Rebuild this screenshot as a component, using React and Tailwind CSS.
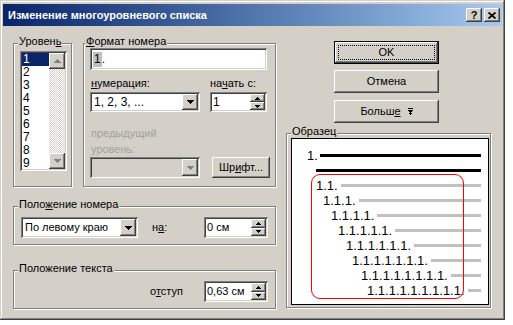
const raised =
  "bg-[#d4d0c8] shadow-[inset_-1px_-1px_0_#404040,inset_1px_1px_0_#fff,inset_-2px_-2px_0_#808080,inset_2px_2px_0_#d4d0c8]";
const sunken =
  "shadow-[inset_1px_1px_0_#808080,inset_-1px_-1px_0_#fff,inset_2px_2px_0_#404040,inset_-2px_-2px_0_#d4d0c8]";

function Down({ color = "#000" }) {
  return (
    <svg width="7" height="4" viewBox="0 0 7 4" shapeRendering="crispEdges">
      <path d="M0 0h7v1H0zM1 1h5v1H1zM2 2h3v1H2zM3 3h1v1H3z" fill={color} />
    </svg>
  );
}

function Up({ color = "#000" }) {
  return (
    <svg width="7" height="4" viewBox="0 0 7 4" shapeRendering="crispEdges">
      <path d="M3 0h1v1H3zM2 1h3v1H2zM1 2h5v1H1zM0 3h7v1H0z" fill={color} />
    </svg>
  );
}

function SmallUp() {
  return (
    <svg width="5" height="3" viewBox="0 0 5 3" shapeRendering="crispEdges">
      <path d="M2 0h1v1H2zM1 1h3v1H1zM0 2h5v1H0z" fill="#000" />
    </svg>
  );
}

function SmallDown() {
  return (
    <svg width="5" height="3" viewBox="0 0 5 3" shapeRendering="crispEdges">
      <path d="M0 0h5v1H0zM1 1h3v1H1zM2 2h1v1H2z" fill="#000" />
    </svg>
  );
}

function Group({ label, left = "left-[4px]", className = "", children }) {
  return (
    <div className={"relative border border-[#808080] shadow-[inset_1px_1px_0_#fff,1px_1px_0_#fff] " + className}>
      <span className={"absolute -top-[9px] bg-[#d4d0c8] px-[1px] leading-[13px] whitespace-nowrap " + left}>{label}</span>
      {children}
    </div>
  );
}

function Combo({ value, className = "", disabled }) {
  return (
    <div className={`${sunken} ${disabled ? "bg-[#d4d0c8]" : "bg-white"} p-[2px] flex ${className}`}>
      <div className="flex-1 flex items-center pl-[2px] whitespace-nowrap">{value}</div>
      <div className={`${raised} w-[16px] flex items-center justify-center`}>
        <Down color={disabled ? "#808080" : "#000"} />
      </div>
    </div>
  );
}

function Spin({ value, className = "" }) {
  return (
    <div className={`${sunken} bg-white p-[2px] flex ${className}`}>
      <div className="flex-1 flex items-center pl-[1px] whitespace-nowrap">{value}</div>
      <div className="w-[15px] flex flex-col">
        <div className={`${raised} flex-1 flex items-center justify-center`}>
          <SmallUp />
        </div>
        <div className={`${raised} flex-1 flex items-center justify-center`}>
          <SmallDown />
        </div>
      </div>
    </div>
  );
}

const rows = [
  { t: "1.1.", pl: "pl-[24px]" },
  { t: "1.1.1.", pl: "pl-[31px]" },
  { t: "1.1.1.1.", pl: "pl-[39px]" },
  { t: "1.1.1.1.1.", pl: "pl-[46px]" },
  { t: "1.1.1.1.1.1.", pl: "pl-[54px]" },
  { t: "1.1.1.1.1.1.1.", pl: "pl-[60px]" },
  { t: "1.1.1.1.1.1.1.1.", pl: "pl-[69px]" },
  { t: "1.1.1.1.1.1.1.1.1.", pl: "pl-[75px]" },
];

export default function App() {
  return (
    <div className="w-[513px] h-[325px] bg-white font-['Liberation_Sans',Arial,sans-serif] text-[11px] text-black">
      <div className="w-[505px] h-[320px] bg-[#d4d0c8] pt-[4px] px-[3px] shadow-[inset_-1px_-1px_0_#404040,inset_1px_1px_0_#d4d0c8,inset_-2px_-2px_0_#808080,inset_2px_2px_0_#fff]">
        {/* title bar */}
        <div className="h-[22px] flex items-center pl-[5px] pr-[2px] bg-linear-to-r from-[#0a246a] to-[#a6caf0]">
          <span className="flex-1 text-white font-bold text-[11px]">Изменение многоуровневого списка</span>
          <div className={`${raised} w-[16px] h-[14px] flex items-center justify-center font-bold text-[11px] leading-none`}>?</div>
          <div className={`${raised} w-[16px] h-[14px] ml-[2px] flex items-center justify-center`}>
            <svg width="8" height="7" viewBox="0 0 8 7">
              <path d="M0.5 0.5L7.5 6.5M7.5 0.5L0.5 6.5" stroke="#000" strokeWidth="1.7" />
            </svg>
          </div>
        </div>

        <div className="flex pl-[10px] mt-[15px]">
          {/* left column */}
          <div className="w-[263px] pt-[2px]">
            <div className="flex gap-[11px] h-[144px]">
              <Group label={<>Уровен<u>ь</u></>} left="left-[4px]" className="w-[59px] h-full pl-[6px] pt-[7px]">
                <div className={`${sunken} bg-white w-[47px] h-[120px] p-[2px] flex`}>
                  <div className="flex-1 text-[12px]">
                    {["1", "2", "3", "4", "5", "6", "7", "8", "9"].map((n, i) => (
                      <div
                        key={n}
                        className={`h-[13px] leading-[13px] pl-[1px] ${i === 0 ? "bg-[#0a246a] text-white" : ""}`}
                      >
                        {n}
                      </div>
                    ))}
                  </div>
                  <div className="w-[16px] flex flex-col bg-[repeating-conic-gradient(#d4d0c8_0_25%,#fff_0_50%)] bg-[length:2px_2px]">
                    <div className={`${raised} h-[16px] flex items-center justify-center`}>
                      <Up color="#808080" />
                    </div>
                    <div className="flex-1" />
                    <div className={`${raised} h-[16px] flex items-center justify-center`}>
                      <Down color="#808080" />
                    </div>
                  </div>
                </div>
              </Group>

              <Group label={<><u>Ф</u>ормат номера</>} left="left-[1px]" className="w-[193px] h-full pl-[6px] pt-[4px]">
                <div className={`${sunken} bg-white w-[177px] h-[22px] pl-[3px] flex items-center text-[12px]`}>
                  <span className="bg-[#c0c0c0] leading-[15px] px-[1px]">1</span>
                  <span>.</span>
                </div>
                <div className="flex mt-[7px]">
                  <div className="w-[110px]">
                    <div className="h-[13px] leading-[13px] pl-[1px]"><u>н</u>умерация:</div>
                    <Combo value="1, 2, 3, ..." className="h-[20px] mt-[2px] text-[12px]" />
                  </div>
                  <div className="w-[57px] ml-[10px]">
                    <div className="h-[13px] leading-[13px]">на<u>ч</u>ать с:</div>
                    <Spin value="1" className="h-[20px] mt-[2px] text-[12px]" />
                  </div>
                </div>
                <div className="mt-[13px] text-[#a0a0a0] leading-[16px] pl-[1px]">
                  <div>предыдущий</div>
                  <div>уровень:</div>
                </div>
                <div className="flex">
                  <Combo value="" disabled className="w-[110px] h-[21px]" />
                  <div className={`${raised} ml-[12px] w-[58px] h-[21px] flex items-center justify-center`}>
                    Шр<u>и</u>фт...
                  </div>
                </div>
              </Group>
            </div>

            <Group label={<>Поло<u>ж</u>ение номера</>} className="mt-[19px] h-[39px] pl-[7px] pt-[10px]">
              <div className="flex items-center">
                <Combo value="По левому краю" className="w-[117px] h-[21px]" />
                <div className="ml-[14px] w-[52px]">н<u>а</u>:</div>
                <Spin value="0 см" className="w-[64px] h-[21px]" />
              </div>
            </Group>

            <Group label="Положение текста" className="mt-[25px] h-[39px] pl-[136px] pt-[10px]">
              <div className="flex items-center">
                <div className="w-[54px]">о<u>т</u>ступ</div>
                <Spin value="0,63 см" className="w-[64px] h-[21px]" />
              </div>
            </Group>
          </div>

          {/* right column */}
          <div className="ml-[10px] w-[207px]">
            <div className="ml-[48px] w-[105px]">
              <div className="h-[23px] border border-black">
                <div className={`${raised} h-full p-[3px]`}>
                  <div className="h-full border border-dotted border-black flex items-center justify-center">OK</div>
                </div>
              </div>
              <div className={`${raised} h-[23px] mt-[6px] flex items-center justify-center`}>Отмена</div>
              <div className={`${raised} h-[23px] mt-[7px] flex items-center justify-center gap-[7px]`}>
                <span>Больш<u>е</u></span>
                <svg width="5" height="7" viewBox="0 0 5 7" shapeRendering="crispEdges">
                  <path d="M0 0h5v1H0zM0 2h5v1H0zM1 3h3v1H1zM2 4h1v3H2zM1 5h3v1H1z" fill="#000" />
                </svg>
              </div>
            </div>

            <Group label="Образец" className="mt-[10px] w-[205px] h-[175px] pl-[4px] pt-[4px]">
              <div className="relative w-[198px] h-[167px] bg-white border border-black pt-[9px] pr-[7px] text-[13px] leading-[15px]">
                <div className="h-[15px] flex items-center pl-[15px]">
                  <span>1.</span>
                  <div className="flex-1 h-[3px] bg-black ml-[2px]" />
                </div>
                <div className="h-[15px] flex items-center pl-[24px]">
                  <div className="flex-1 h-[3px] bg-black" />
                </div>
                {rows.map((r) => (
                  <div key={r.t} className={`h-[15px] flex items-center whitespace-nowrap ${r.pl}`}>
                    <span>{r.t}</span>
                    <div className="flex-1 h-[3px] bg-[#c0c0c0] ml-[3px]" />
                  </div>
                ))}
                <div className="absolute left-[19px] top-[35px] w-[153px] h-[125px] rounded-[9px] border border-[#ff0000]" />
              </div>
            </Group>
          </div>
        </div>
      </div>
    </div>
  );
}
